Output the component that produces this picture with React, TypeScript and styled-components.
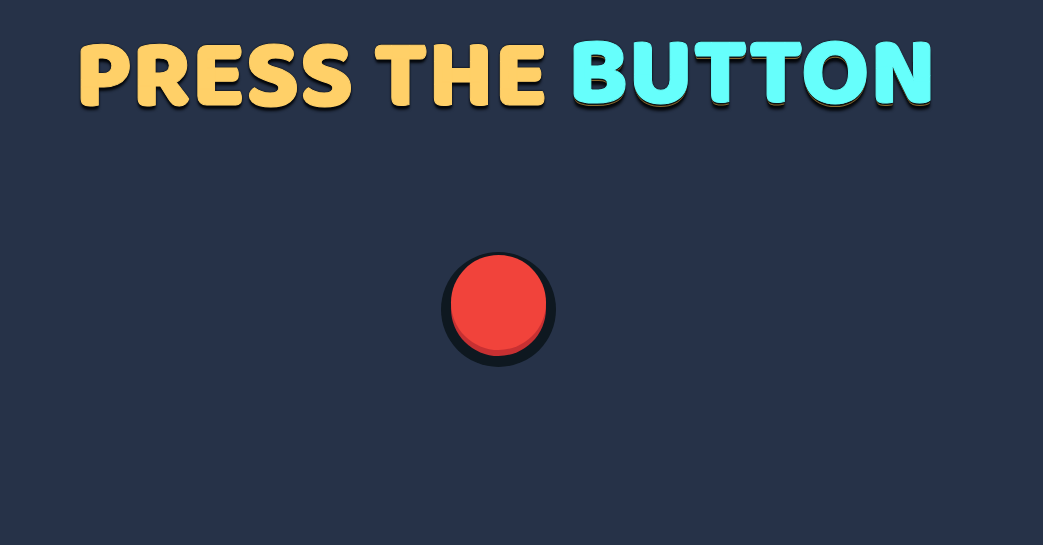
import React from "react";
import styled, { createGlobalStyle } from "styled-components";

const GlobalStyle = createGlobalStyle`
  body {
    margin: 0;
    background: #263248;
    font-family: "Baloo 2", Lato, sans-serif;
  }
`;

const Page = styled.main`
  display: flex;
  flex-direction: column;
  align-items: center;
  min-height: 100vh;
  box-sizing: border-box;
  padding: 0 46px 20px 0;
`;

const Title = styled.h1`
  display: flex;
  flex-wrap: wrap;
  justify-content: center;
  gap: 0 20px;
  margin: 0 0 0 14px;
  font-size: 98px;
  line-height: 156px;
  font-weight: 800;
  text-transform: uppercase;
`;

const Word = styled.span`
  color: #ffd068;
  -webkit-text-stroke: 1px #ffd068;
  text-shadow: 0 -1px 1px #10161f, 0 0 2px #10161f, 0 2px 2px #05080c,
    0 4px 3px #05080c;
`;

const Highlight = styled(Word)`
  color: #66fffc;
  -webkit-text-stroke-color: #66fffc;
  margin-top: -3px;
  text-shadow: 0 -1px 1px #10161f, 0 0 2px #10161f, 0 1px 1px #05080c,
    0 2px 0 #1c1a16, 0 3px 0 #8a6a30, 0 4px 1px #05080c, 0 7px 3px #05080c;
`;

const Housing = styled.div`
  display: flex;
  justify-content: center;
  align-items: flex-start;
  box-sizing: border-box;
  width: 115px;
  height: 115px;
  margin-top: 96px;
  padding-top: 3px;
  border-radius: 50%;
  background: #0e1820;
`;

const PushButton = styled.button`
  width: 95px;
  height: 95px;
  padding: 0;
  border: 0;
  border-radius: 50%;
  background: #f1433b;
  box-shadow: 0 6px 0 #c73032;
  cursor: pointer;

  &:active {
    box-shadow: 0 2px 0 #c73032;
  }
`;

export default function App() {
  return (
    <>
      <GlobalStyle />
      <Page>
        <Title>
          <Word>Press</Word>
          <Word>The</Word>
          <Highlight>Button</Highlight>
        </Title>
        <Housing>
          <PushButton type="button" aria-label="Press" />
        </Housing>
      </Page>
    </>
  );
}
